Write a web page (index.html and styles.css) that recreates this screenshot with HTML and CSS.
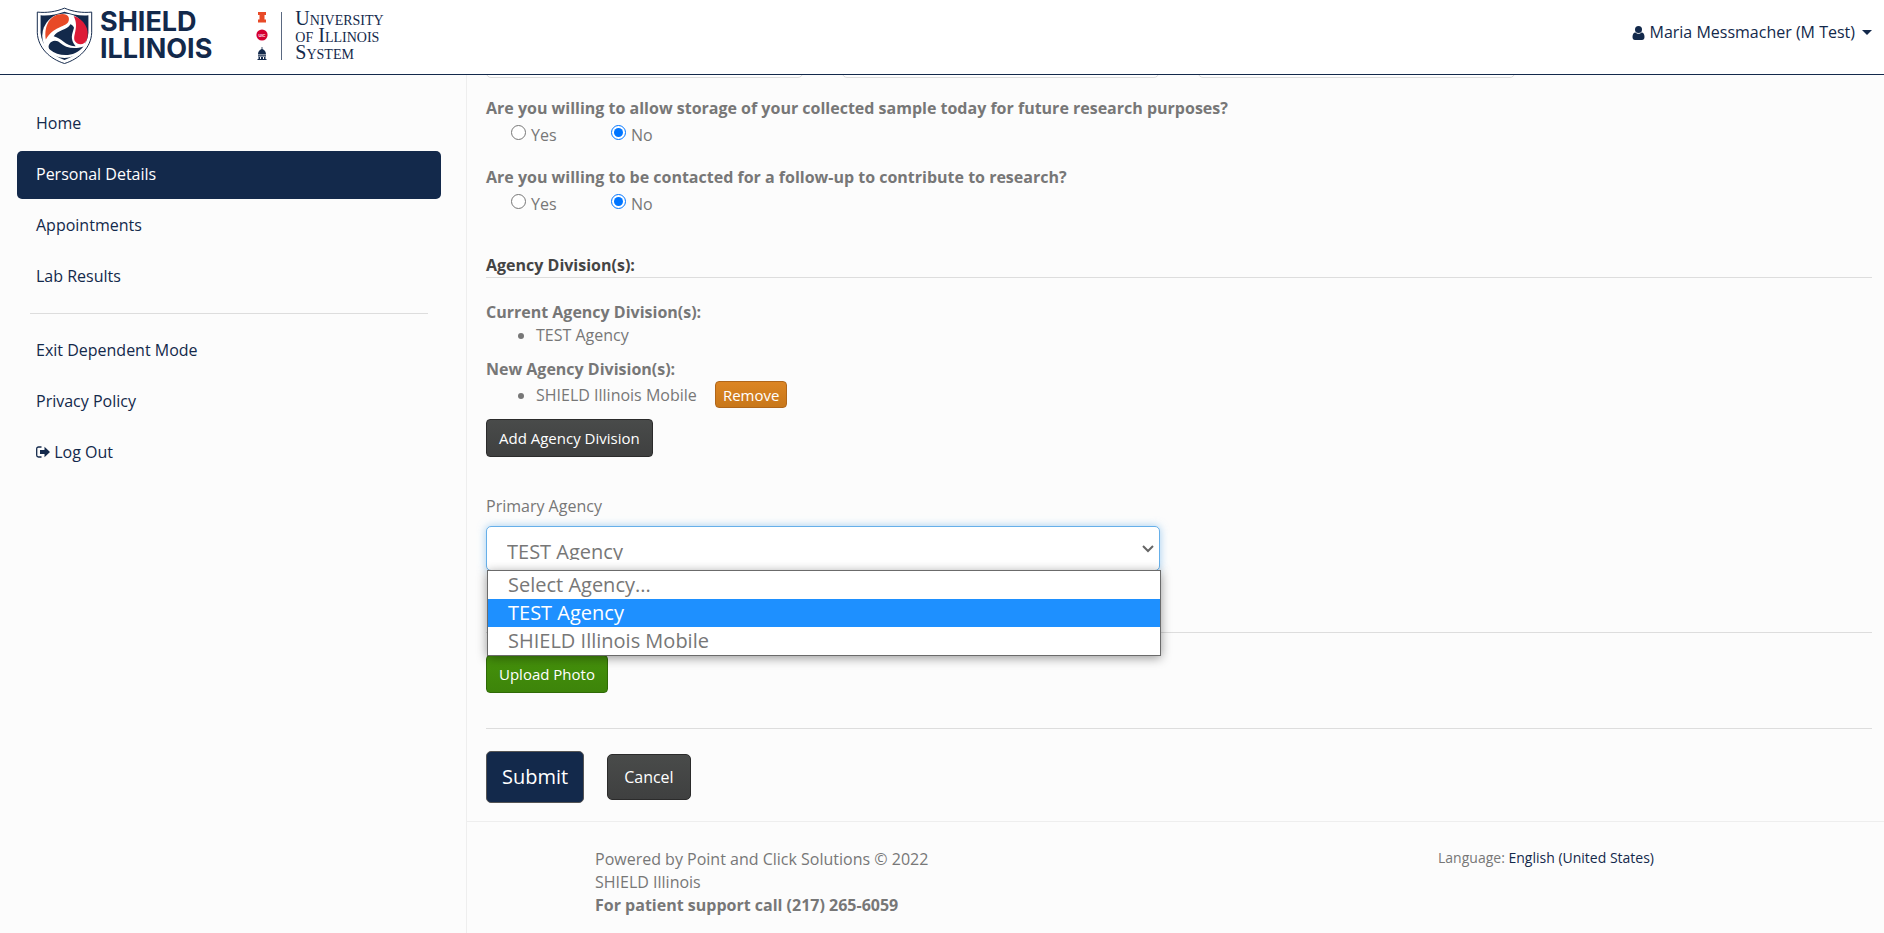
FILE: index.html
```html
<!DOCTYPE html>
<html lang="en">
<head>
    <meta charset="UTF-8">
    <meta name="viewport" content="width=device-width, initial-scale=1.0">
    <title>Personal Details</title>
    <link rel="stylesheet" href="styles.css">
</head>
<body>

<header class="header">
    <a class="brand" href="#">
        <svg class="shield" viewBox="106 20 174 176" aria-hidden="true">
            <path fill="#fff" stroke="#13294b" stroke-width="3" d="M193 23C167 34 138 38 110 35V98C112 144 148 178 193 192C238 178 274 144 276 98V35C248 38 219 34 193 23Z"/>
            <path fill="#13294b" d="M193 34C170 43 144 47 120 45V98C123 137 153 167 193 181C233 167 263 137 266 98V45C242 47 216 43 193 34Z"/>
            <circle cx="193" cy="107" r="68" fill="#fff"/>
            <path fill="#e84a27" d="M136 119C129 75 151 41 187 41C204 41 211 54 204 66C192 82 159 79 136 119Z"/>
            <path fill="#dd1b37" d="M221 47C254 58 270 87 262 117C256 136 234 138 225 124C216 107 239 83 221 47Z"/>
            <path fill="#13294b" d="M146 134C153 120 170 120 180 129C195 143 221 150 251 140C225 174 175 172 149 150C144 146 143 140 146 134Z"/>
            <path fill="#13294b" d="M160 109C171 89 202 90 211 72C216 73 220 77 222 83C217 102 208 116 227 139C197 141 185 114 160 109Z"/>
        </svg>
        <span class="brand-name">SHIELD<br>ILLINOIS</span>
    </a>
    <a class="system" href="#">
        <svg class="marks" viewBox="0 0 26 48" aria-hidden="true">
            <path fill="#e84a27" d="M2 0H10V3H8.500V7.500H10V10.500H2V7.500H3.500V3H2Z"/>
            <circle cx="6" cy="23" r="5.600" fill="#d50032"/>
            <text x="6" y="25" text-anchor="middle" class="uic">UIC</text>
            <path fill="#13294b" d="M5.600 35H6.400V37C9 38 10 40 10 42.500H2C2 40 3 38 5.600 37ZM2 43.200H10V44.400H2ZM2.500 45H4V47H5V45H7V47H8V45H9.500V47H10.500V48H1.500V47H2.500Z"/>
            <path fill="#5a6981" d="M25 0H26V48H25Z"/>
        </svg>
        <span class="system-name">University<br>of Illinois<br>System</span>
    </a>
    <a class="user" href="#">
        <svg width="13" height="14" viewBox="0 0 12 14" aria-hidden="true">
            <circle cx="6" cy="3.500" r="3.500" fill="#13294b"/>
            <path fill="#13294b" d="M3 6.500C1 6.500 0 8.500 0 11C0 13 1 14 2.500 14H9.500C11 14 12 13 12 11C12 8.500 11 6.500 9 6.500C7.500 8.200 4.500 8.200 3 6.500Z"/>
        </svg>
        <span>Maria Messmacher (M Test)</span>
        <span class="caret"></span>
    </a>
</header>

<div class="page">
    <nav class="sidebar">
        <a href="#">Home</a>
        <a href="#" class="active">Personal Details</a>
        <a href="#">Appointments</a>
        <a href="#">Lab Results</a>
        <hr>
        <a href="#">Exit Dependent Mode</a>
        <a href="#">Privacy Policy</a>
        <a href="#">
            <svg width="14" height="12" viewBox="0 0 14 12" aria-hidden="true">
                <path fill="none" stroke="#13294b" stroke-width="1.300" d="M5.500 1H2.500C1.500 1 .7 1.700 .7 2.700V9.300C.7 10.300 1.500 11 2.500 11H5.500"/>
                <path fill="#13294b" d="M4 4H8.500V.8L14 6L8.500 11.200V8H4Z"/>
            </svg>
            Log Out</a>
    </nav>

    <div class="main">
        <form class="content">
            <div class="fields">
                <input type="text" aria-label="Field 1">
                <input type="text" aria-label="Field 2">
                <input type="text" aria-label="Field 3">
            </div>

            <fieldset>
                <legend>Are you willing to allow storage of your collected sample today for future research purposes?</legend>
                <div class="options">
                    <label><input type="radio" name="storage"> Yes</label>
                    <label><input type="radio" name="storage" checked> No</label>
                </div>
            </fieldset>
            <fieldset>
                <legend>Are you willing to be contacted for a follow-up to contribute to research?</legend>
                <div class="options">
                    <label><input type="radio" name="followup"> Yes</label>
                    <label><input type="radio" name="followup" checked> No</label>
                </div>
            </fieldset>

            <h3>Agency Division(s):</h3>
            <strong>Current Agency Division(s):</strong>
            <ul class="divisions">
                <li>TEST Agency</li>
            </ul>
            <strong>New Agency Division(s):</strong>
            <ul class="divisions">
                <li>SHIELD Illinois Mobile <button type="button" class="btn btn-remove">Remove</button></li>
            </ul>
            <button type="button" class="btn btn-dark">Add Agency Division</button>

            <label class="agency-label" for="agency">Primary Agency</label>
            <div class="agency">
                <select id="agency">
                    <option>Select Agency...</option>
                    <option selected>TEST Agency</option>
                    <option>SHIELD Illinois Mobile</option>
                </select>
                <svg class="arrow" width="12" height="8" viewBox="0 0 12 8" aria-hidden="true">
                    <path fill="none" stroke="#666" stroke-width="2" d="M1 1L6 6L11 1"/>
                </svg>
                <ul class="menu" role="listbox" aria-label="Primary Agency">
                    <li role="option">Select Agency...</li>
                    <li role="option" class="selected" aria-selected="true">TEST Agency</li>
                    <li role="option">SHIELD Illinois Mobile</li>
                </ul>
            </div>

            <div class="photo">
                <button type="button" class="btn btn-green">Upload Photo</button>
            </div>

            <div class="actions">
                <button type="submit" class="btn btn-submit">Submit</button>
                <button type="button" class="btn btn-dark btn-cancel">Cancel</button>
            </div>
        </form>

        <footer class="footer">
            <div>
                Powered by Point and Click Solutions © 2022<br>
                SHIELD Illinois<br>
                <strong>For patient support call (217) 265-6059</strong>
            </div>
            <div class="language">Language: <a href="#">English (United States)</a></div>
        </footer>
    </div>
</div>

</body>
</html>
```

FILE: styles.css
```css
* {
    box-sizing: border-box;
}
body {
    margin: 0;
    min-height: 100vh;
    display: flex;
    flex-direction: column;
    font-family: "Open Sans", Arial, sans-serif;
    font-size: 16px;
    line-height: 23px;
    color: #777;
    background-color: #fcfcfc;
}
a {
    color: #13294b;
    text-decoration: none;
}
hr {
    border: 0;
    border-top: 1px solid #ddd;
}

/* header */
.header {
    display: flex;
    align-items: flex-start;
    height: 75px;
    padding: 7px 12px 0 36px;
    background-color: #fff;
    border-bottom: 1px solid #13294b;
    position: relative;
    z-index: 1;
}
.brand {
    display: flex;
    gap: 7px;
}
.shield {
    width: 57px;
    height: 58px;
}
.brand-name {
    font-family: Inter, sans-serif;
    font-size: 27px;
    font-weight: bold;
    line-height: 27px;
    padding-top: 1px;
}
.system {
    display: flex;
    margin-left: 44px;
}
.marks {
    width: 26px;
    height: 48px;
    margin-top: 5px;
}
.uic {
    font-family: "Liberation Sans", sans-serif;
    font-size: 4px;
    font-weight: bold;
    fill: #fff;
}
.system-name {
    font-family: "Liberation Serif", serif;
    font-size: 20px;
    font-variant: small-caps;
    line-height: 17px;
    margin-left: 13px;
    padding-top: 3px;
}
.user {
    display: flex;
    align-items: center;
    gap: 5px;
    margin-left: auto;
    padding-top: 14px;
}
.caret {
    border: 5px solid transparent;
    border-top-color: #13294b;
    border-bottom: 0;
    margin-left: 2px;
}

/* layout */
.page {
    display: flex;
    flex: 1;
}
.sidebar {
    width: 467px;
    padding: 25px 25px 0 17px;
    border-right: 1px solid #eee;
}
.sidebar a {
    display: block;
    padding: 12px 19px 13px;
    margin-bottom: 3px;
    border-radius: 5px;
}
.sidebar a.active {
    color: #fff;
    background-color: #13294b;
}
.sidebar hr {
    margin: 12px 13px 13px;
}
.main {
    flex: 1;
    overflow: hidden;
}
.content {
    padding: 0 12px 18px 19px;
}

/* form */
.fields {
    display: flex;
    gap: 39px;
    margin-top: -37px;
    margin-bottom: 19px;
}
.fields input {
    width: 317px;
    height: 40px;
    border: 1px solid #ddd;
    border-radius: 5px;
    background-color: #fff;
}
fieldset {
    border: 0;
    margin: 0 0 19px;
    padding: 0;
}
legend {
    padding: 0;
    font-weight: bold;
}
.options {
    display: flex;
    padding: 4px 0 0 25px;
}
.options label {
    display: flex;
    gap: 5px;
    width: 100px;
}
.options input {
    width: 15px;
    height: 15px;
    margin: 1px 0 0;
}
h3 {
    margin: 38px 0 23px;
    font-size: 16px;
    color: #444;
    border-bottom: 1px solid #ddd;
}
.divisions {
    margin: 0 0 11px;
    padding-left: 50px;
}
.btn {
    font-family: inherit;
    font-size: 15px;
    line-height: 22px;
    color: #fff;
    border: 1px solid;
    border-radius: 4px;
    padding: 7px 12px;
}
.btn-remove {
    padding: 2px 7px 1px;
    margin-left: 14px;
    background-image: linear-gradient(#dc8523, #c8771a);
    border-color: #b0661a;
}
.btn-dark {
    background-image: linear-gradient(#494b4a, #3f4040);
    border-color: #2b2b2b;
}
.btn-green {
    background-image: linear-gradient(#45920b, #3d840a);
    border-color: #2f6a06;
}
.agency-label {
    display: block;
    margin: 38px 0 8px;
}
.agency {
    position: relative;
    max-width: 674px;
    font-size: 20px;
}
.agency select {
    display: block;
    width: 100%;
    height: 45px;
    padding: 11px 20px 10px;
    font: inherit;
    line-height: 28px;
    color: #777;
    background-color: #fff;
    border: 1px solid #66afe9;
    border-radius: 5px;
    box-shadow: 0 0 8px rgba(102, 175, 233, 0.6);
    outline: 0;
    appearance: none;
}
.arrow {
    position: absolute;
    top: 19px;
    right: 6px;
    pointer-events: none;
}
.menu {
    position: absolute;
    top: 44px;
    left: 1px;
    width: 100%;
    margin: 0;
    padding: 0;
    list-style: none;
    line-height: 28px;
    background-color: #fff;
    border: 1px solid #6b6b6b;
    box-shadow: 0 2px 10px rgba(0, 0, 0, 0.4);
}
.menu li {
    padding-left: 20px;
}
.menu .selected {
    color: #fff;
    background-color: #1e90ff;
}
.photo {
    margin-top: 61px;
    padding: 22px 0 35px;
    border-top: 1px solid #ddd;
    border-bottom: 1px solid #ddd;
}
.photo .btn {
    display: block;
}
.actions {
    display: flex;
    align-items: center;
    gap: 23px;
    padding-top: 22px;
}
.btn-submit {
    font-size: 20px;
    line-height: 28px;
    padding: 11px 15px;
    background-color: #13294b;
    border-color: #555;
    border-radius: 5px;
}
.btn-cancel {
    font-size: 16px;
    padding: 11px 16px;
    border-radius: 5px;
}

/* footer */
.footer {
    display: flex;
    justify-content: space-between;
    padding: 26px 230px 16px 128px;
    border-top: 1px solid #eee;
}
.language {
    font-size: 14px;
    line-height: 20px;
}
```
